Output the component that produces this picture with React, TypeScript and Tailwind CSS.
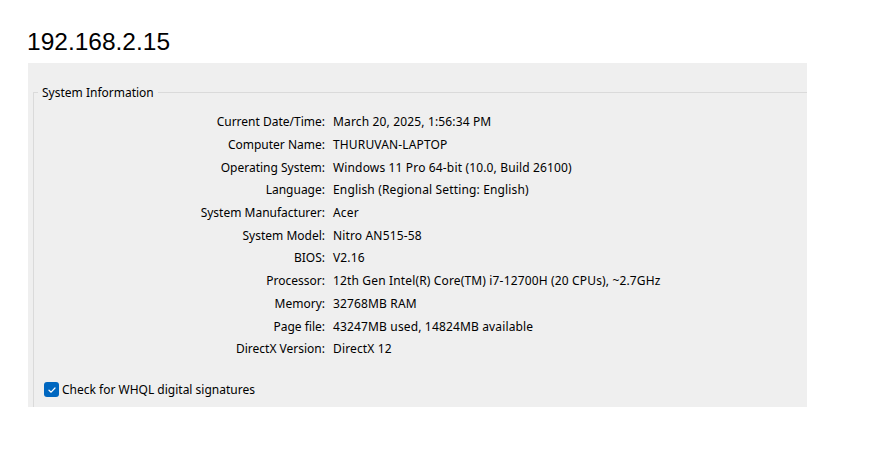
const rows: [string, string][] = [
  ['Current Date/Time:', 'March 20, 2025, 1:56:34 PM'],
  ['Computer Name:', 'THURUVAN-LAPTOP'],
  ['Operating System:', 'Windows 11 Pro 64-bit (10.0, Build 26100)'],
  ['Language:', 'English (Regional Setting: English)'],
  ['System Manufacturer:', 'Acer'],
  ['System Model:', 'Nitro AN515-58'],
  ['BIOS:', 'V2.16'],
  ['Processor:', '12th Gen Intel(R) Core(TM) i7-12700H (20 CPUs), ~2.7GHz'],
  ['Memory:', '32768MB RAM'],
  ['Page file:', '43247MB used, 14824MB available'],
  ['DirectX Version:', 'DirectX 12'],
];

const App = () => {
  return (
    <div className="min-h-screen bg-white pl-[27px] pt-[28px]">
      <h1 className="font-['Liberation_Sans',Arial,sans-serif] text-[24.5px] leading-[28px] text-black">
        192.168.2.15
      </h1>
      <div className="mt-[7px] ml-[1px] h-[344px] w-[779px] overflow-hidden bg-[#efefef] font-['Noto_Sans',sans-serif] text-[12px] text-black">
        <div className="relative mt-[29px] ml-[5px] h-[400px] border-t border-l border-[#dadada] pt-[18px]">
          <span className="absolute -top-[8px] left-[4px] bg-[#efefef] px-[4px] leading-[16px]">
            System Information
          </span>
          <div className="flex flex-col">
            {rows.map(([label, value]) => (
              <div key={label} className="grid h-[22.7px] grid-cols-[291px_1fr] items-center gap-x-[8px]">
                <span className="text-right">{label}</span>
                <span className="whitespace-nowrap tracking-[0.15px]">{value}</span>
              </div>
            ))}
          </div>
          <label className="mt-[20px] ml-[10px] flex items-center gap-[3px]">
            <span className="flex h-[15px] w-[15px] items-center justify-center rounded-[3px] bg-[#0067c0]">
              <svg width="10" height="10" viewBox="0 0 10 10" fill="none">
                <path d="M2 5.2 L4.1 7.2 L8 3" stroke="white" strokeWidth="1.2" strokeLinecap="round" strokeLinejoin="round" />
              </svg>
            </span>
            <span>Check for WHQL digital signatures</span>
          </label>
        </div>
      </div>
    </div>
  );
};

export default App;
